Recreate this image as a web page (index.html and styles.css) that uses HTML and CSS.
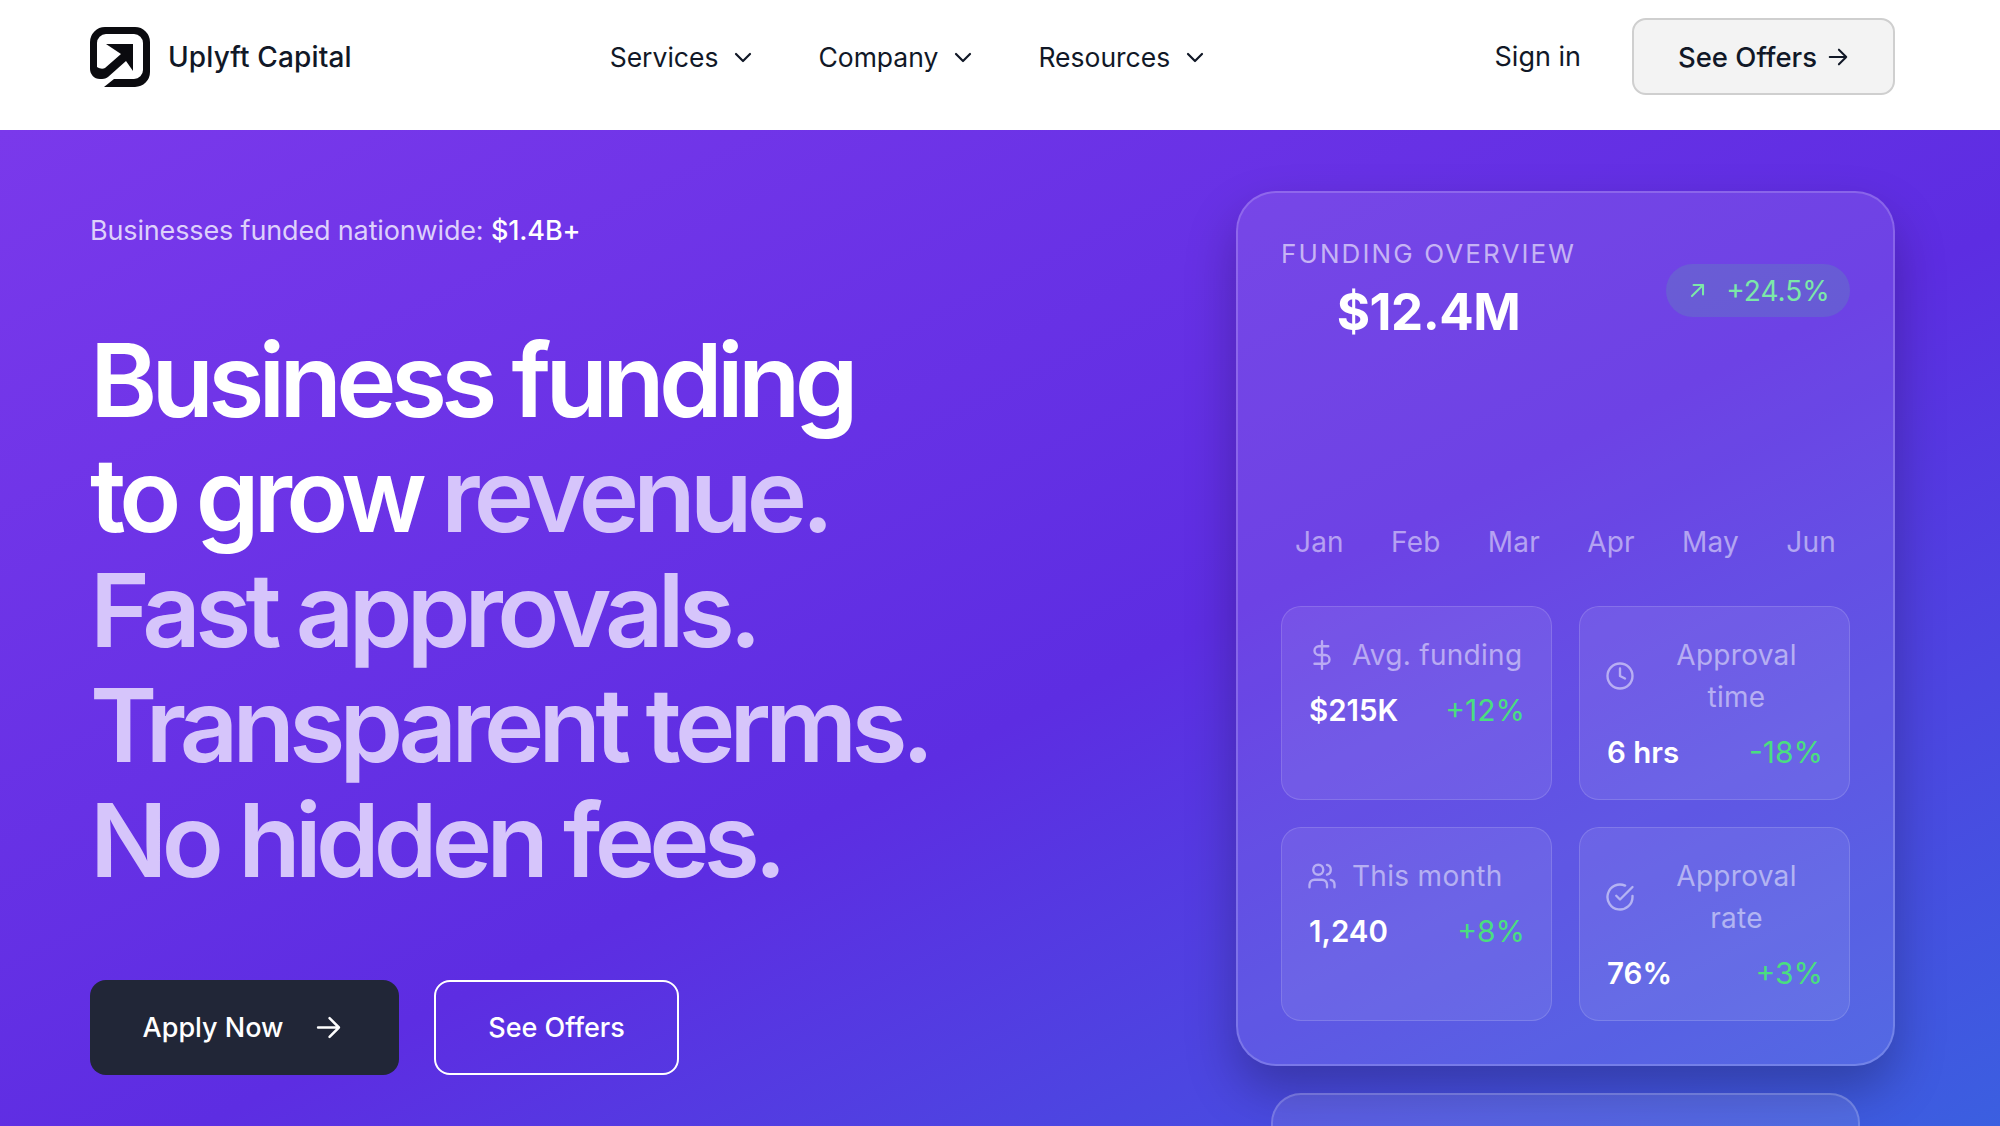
FILE: index.html
```html
<!DOCTYPE html>
<html lang="en">
<head>
    <meta charset="UTF-8">
    <meta name="viewport" content="width=device-width, initial-scale=1.0">
    <title>Uplyft Capital</title>
    <link rel="stylesheet" href="styles.css">
</head>
<body>
    <header class="top-header">
        <a href="#" class="brand">
            <svg class="brand-mark" viewBox="0 0 60 60" aria-hidden="true">
                <path fill="#0b0b0f" d="M15 0H45A15 15 0 0 1 60 15V45A15 15 0 0 1 45 60H14L24 52H44A9 9 0 0 0 53 43V16A9 9 0 0 0 44 7H16A9 9 0 0 0 7 16V40C10 42 13 42 15 41L31 27L16 17H43V44L36 34L18 50C15 52 13 52 10 52C4 52 0 47 0 42V15A15 15 0 0 1 15 0Z"/>
            </svg>
            <span class="brand-name">Uplyft Capital</span>
        </a>
        <nav>
            <ul class="nav-links">
                <li><a href="#">Services<svg class="chevron" viewBox="0 0 24 24"><path d="M5 9l7 7 7-7"/></svg></a></li>
                <li><a href="#">Company<svg class="chevron" viewBox="0 0 24 24"><path d="M5 9l7 7 7-7"/></svg></a></li>
                <li><a href="#">Resources<svg class="chevron" viewBox="0 0 24 24"><path d="M5 9l7 7 7-7"/></svg></a></li>
            </ul>
        </nav>
        <div class="header-actions">
            <a href="#" class="sign-in">Sign in</a>
            <a href="#" class="offers-button">See Offers<svg class="offers-arrow" viewBox="0 0 24 24"><path d="M3 12h18M13 4l8 8-8 8"/></svg></a>
        </div>
    </header>

    <main class="hero">
        <section class="hero-copy">
            <p class="eyebrow">Businesses funded nationwide: <strong>$1.4B+</strong></p>
            <h1 class="headline">Business funding<br>to grow <span class="soft">revenue.<br>Fast approvals.<br>Transparent terms.<br>No hidden fees.</span></h1>
            <div class="cta-row">
                <a href="#" class="cta cta-dark">Apply Now<svg class="cta-arrow" viewBox="0 0 24 24"><path d="M2 12h20M13 3l9 9-9 9"/></svg></a>
                <a href="#" class="cta cta-outline">See Offers</a>
            </div>
        </section>

        <aside class="hero-side">
            <div class="panel">
                <div class="panel-top">
                    <div class="panel-title">
                        <div class="panel-label">FUNDING OVERVIEW</div>
                        <div class="panel-total">$12.4M</div>
                    </div>
                    <div class="trend-pill">
                        <svg class="trend-icon" viewBox="0 0 24 24"><path d="M5 19L19 5M7 5h12v12"/></svg>
                        <span>+24.5%</span>
                    </div>
                </div>
                <div class="months">
                    <span>Jan</span><span>Feb</span><span>Mar</span><span>Apr</span><span>May</span><span>Jun</span>
                </div>
                <div class="stats">
                    <div class="stat-card">
                        <div class="stat-head">
                            <svg class="stat-icon" viewBox="0 0 24 24"><path d="M12 1v22M17 5H9.5a3.5 3.5 0 0 0 0 7h5a3.5 3.5 0 0 1 0 7H6"/></svg>
                            <span class="stat-label">Avg. funding</span>
                        </div>
                        <div class="stat-row"><span class="stat-value">$215K</span><span class="stat-change">+12%</span></div>
                    </div>
                    <div class="stat-card">
                        <div class="stat-head">
                            <svg class="stat-icon" viewBox="0 0 24 24"><circle cx="12" cy="12" r="10"/><path d="M12 6v6l4 2"/></svg>
                            <span class="stat-label">Approval time</span>
                        </div>
                        <div class="stat-row"><span class="stat-value">6 hrs</span><span class="stat-change">-18%</span></div>
                    </div>
                    <div class="stat-card">
                        <div class="stat-head">
                            <svg class="stat-icon" viewBox="0 0 24 24"><path d="M16 21v-2a4 4 0 0 0-4-4H6a4 4 0 0 0-4 4v2"/><circle cx="9" cy="7" r="4"/><path d="M22 21v-2a4 4 0 0 0-3-3.87M16 3.13a4 4 0 0 1 0 7.75"/></svg>
                            <span class="stat-label">This month</span>
                        </div>
                        <div class="stat-row"><span class="stat-value">1,240</span><span class="stat-change">+8%</span></div>
                    </div>
                    <div class="stat-card">
                        <div class="stat-head">
                            <svg class="stat-icon" viewBox="0 0 24 24"><path d="M22 11.08V12a10 10 0 1 1-5.93-9.14"/><path d="M22 4L12 14.01l-3-3"/></svg>
                            <span class="stat-label">Approval rate</span>
                        </div>
                        <div class="stat-row"><span class="stat-value">76%</span><span class="stat-change">+3%</span></div>
                    </div>
                </div>
            </div>
            <div class="panel-next"></div>
        </aside>
    </main>
</body>
</html>
```

FILE: styles.css
```css
* {
    box-sizing: border-box;
}

html,
body {
    height: 100%;
}

body {
    margin: 0;
    display: flex;
    flex-direction: column;
    overflow: hidden;
    font-family: "Inter", "Liberation Sans", sans-serif;
    color: #111827;
    background: #fff;
}

a {
    color: inherit;
    text-decoration: none;
}

svg {
    fill: none;
    stroke: currentColor;
    stroke-linecap: round;
    stroke-linejoin: round;
    flex-shrink: 0;
}

/* header ========================================================== */

.top-header {
    height: 130px;
    flex-shrink: 0;
    display: flex;
    align-items: center;
    padding: 0 105px 17px 90px;
}

.brand {
    display: flex;
    align-items: center;
    gap: 18px;
}

.brand-mark {
    width: 60px;
    height: 60px;
    stroke: none;
}

.brand-name {
    font-size: 28px;
    font-weight: 500;
    letter-spacing: 0.13px;
}

nav {
    margin-left: 258px;
}

.nav-links {
    list-style-type: none;
    display: flex;
    gap: 63px;
    margin: 0;
    padding: 0;
}

.nav-links a {
    display: flex;
    align-items: center;
    font-size: 26.5px;
}

.chevron {
    width: 24px;
    height: 24px;
    margin-left: 13px;
    stroke-width: 2.2;
}

.header-actions {
    margin-left: auto;
    display: flex;
    align-items: center;
    gap: 51px;
}

.sign-in {
    font-size: 27px;
}

.offers-button {
    width: 263px;
    height: 77px;
    display: flex;
    align-items: center;
    justify-content: center;
    gap: 10px;
    font-size: 27.5px;
    font-weight: 500;
    background-color: #f3f3f3;
    border: 2px solid #cfcfcf;
    border-radius: 14px;
}

.offers-arrow {
    width: 22px;
    height: 22px;
    stroke-width: 2.2;
}

/* hero ============================================================ */

.hero {
    flex: 1;
    min-height: 0;
    display: flex;
    justify-content: space-between;
    padding: 61px 105px 0 90px;
    overflow: hidden;
    background: linear-gradient(to bottom right, #7a39eb 0%, #5d2de2 55%, #3b5fe0 100%);
}

.hero-copy {
    padding-top: 19px;
}

.eyebrow {
    margin: 0;
    font-size: 27px;
    line-height: 42px;
    letter-spacing: -0.15px;
    color: #ddd0fb;
}

.eyebrow strong {
    font-weight: 500;
    color: #fff;
}

.headline {
    margin: 71px 0 0;
    font-size: 102px;
    line-height: 115px;
    font-weight: 600;
    letter-spacing: -5.7px;
    color: #fff;
}

.soft {
    color: #d6c5fb;
}

.cta-row {
    display: flex;
    gap: 35px;
    margin-top: 82px;
}

.cta {
    height: 95px;
    display: flex;
    align-items: center;
    justify-content: center;
    font-size: 27px;
    font-weight: 500;
    color: #fff;
    border-radius: 16px;
}

.cta-dark {
    width: 309px;
    gap: 33px;
    padding-right: 5px;
    background-color: #212637;
}

.cta-outline {
    width: 245px;
    border: 2px solid #fff;
}

.cta-arrow {
    width: 25px;
    height: 25px;
    stroke-width: 2.4;
}

/* funding panel =================================================== */

.hero-side {
    width: 659px;
    flex-shrink: 0;
}

.panel {
    height: 875px;
    padding: 43px;
    background: rgba(255, 255, 255, 0.1);
    border: 2px solid rgba(255, 255, 255, 0.18);
    border-radius: 40px;
    box-shadow: 0 25px 50px rgba(0, 0, 0, 0.25);
}

.panel-next {
    height: 80px;
    margin: 27px 35px 0;
    background: rgba(255, 255, 255, 0.1);
    border: 2px solid rgba(255, 255, 255, 0.18);
    border-radius: 30px;
}

.panel-top {
    display: flex;
    justify-content: space-between;
    align-items: center;
}

.panel-title {
    text-align: center;
}

.panel-label {
    font-size: 26px;
    line-height: 36px;
    letter-spacing: 2.1px;
    color: rgba(255, 255, 255, 0.6);
}

.panel-total {
    margin-top: 10px;
    font-size: 51px;
    line-height: 60px;
    font-weight: 700;
    letter-spacing: -0.5px;
    color: #fff;
}

.trend-pill {
    width: 184px;
    height: 53px;
    display: flex;
    align-items: center;
    justify-content: center;
    gap: 19px;
    margin-top: 2px;
    padding: 1px 0 0 2px;
    font-size: 28px;
    color: #7ce8a8;
    background: rgba(74, 222, 128, 0.16);
    border-radius: 27px;
}

.trend-icon {
    width: 19px;
    height: 19px;
    stroke-width: 2.6;
}

.months {
    display: flex;
    justify-content: space-between;
    margin-top: 179px;
    padding: 0 14px;
    font-size: 28px;
    line-height: 42px;
    letter-spacing: 0.2px;
    color: rgba(255, 255, 255, 0.5);
}

.stats {
    display: grid;
    grid-template-columns: 271px 271px;
    grid-template-rows: 194px 194px;
    justify-content: space-between;
    row-gap: 27px;
    margin-top: 43px;
}

.stat-card {
    padding: 26.5px 26px 26.5px 27px;
    background: rgba(255, 255, 255, 0.08);
    border: 1.5px solid rgba(255, 255, 255, 0.14);
    border-radius: 20px;
}

.stat-head {
    display: flex;
    align-items: center;
    gap: 15px;
    text-align: center;
    font-size: 28px;
    line-height: 42px;
    letter-spacing: 0.3px;
    color: rgba(255, 255, 255, 0.5);
}

.stat-icon {
    width: 30px;
    height: 30px;
    margin-left: -2px;
    stroke-width: 1.9;
}

.stat-row {
    display: flex;
    justify-content: space-between;
    align-items: baseline;
    margin-top: 14.5px;
    line-height: 40px;
}

.stat-value {
    font-size: 29.5px;
    font-weight: 600;
    color: #fff;
}

.stat-change {
    font-size: 30px;
    color: #4ade80;
}
```
